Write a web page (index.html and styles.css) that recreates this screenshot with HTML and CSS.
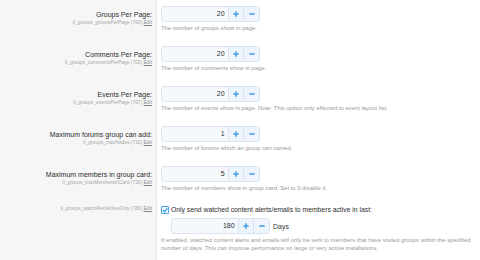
FILE: index.html
```html
<!DOCTYPE html>
<html>
<head>
<meta charset="utf-8">
<link rel="stylesheet" href="styles.css">
</head>
<body>
<div class="options">
  <div class="row">
    <div class="label">
      <div class="title">Groups Per Page:</div>
      <div class="hint">tl_groups_groupsPerPage (700) <span class="edit">Edit</span></div>
    </div>
    <div class="value">
      <div class="spin">
        <span class="field">20</span>
        <span class="btn"><svg viewBox="0 0 6 6" width="6" height="6"><path d="M3 0.3V5.7M0.3 3H5.7"/></svg></span>
        <span class="btn"><svg viewBox="0 0 6 6" width="6" height="6"><path d="M0.3 3H5.7"/></svg></span>
      </div>
      <div class="desc">The number of groups show in page.</div>
    </div>
  </div>
  <div class="row">
    <div class="label">
      <div class="title">Comments Per Page:</div>
      <div class="hint">tl_groups_commentsPerPage (705) <span class="edit">Edit</span></div>
    </div>
    <div class="value">
      <div class="spin">
        <span class="field">20</span>
        <span class="btn"><svg viewBox="0 0 6 6" width="6" height="6"><path d="M3 0.3V5.7M0.3 3H5.7"/></svg></span>
        <span class="btn"><svg viewBox="0 0 6 6" width="6" height="6"><path d="M0.3 3H5.7"/></svg></span>
      </div>
      <div class="desc">The number of comments show in page.</div>
    </div>
  </div>
  <div class="row">
    <div class="label">
      <div class="title">Events Per Page:</div>
      <div class="hint">tl_groups_eventsPerPage (707) <span class="edit">Edit</span></div>
    </div>
    <div class="value">
      <div class="spin">
        <span class="field">20</span>
        <span class="btn"><svg viewBox="0 0 6 6" width="6" height="6"><path d="M3 0.3V5.7M0.3 3H5.7"/></svg></span>
        <span class="btn"><svg viewBox="0 0 6 6" width="6" height="6"><path d="M0.3 3H5.7"/></svg></span>
      </div>
      <div class="desc">The number of events show in page. Note: This option only effected to event layout list.</div>
    </div>
  </div>
  <div class="row">
    <div class="label">
      <div class="title">Maximum forums group can add:</div>
      <div class="hint">tl_groups_maxNodes (710) <span class="edit">Edit</span></div>
    </div>
    <div class="value">
      <div class="spin">
        <span class="field">1</span>
        <span class="btn"><svg viewBox="0 0 6 6" width="6" height="6"><path d="M3 0.3V5.7M0.3 3H5.7"/></svg></span>
        <span class="btn"><svg viewBox="0 0 6 6" width="6" height="6"><path d="M0.3 3H5.7"/></svg></span>
      </div>
      <div class="desc">The number of forums which an group can owned.</div>
    </div>
  </div>
  <div class="row">
    <div class="label">
      <div class="title">Maximum members in group card:</div>
      <div class="hint">tl_groups_maxMembersInCard (720) <span class="edit">Edit</span></div>
    </div>
    <div class="value">
      <div class="spin">
        <span class="field">5</span>
        <span class="btn"><svg viewBox="0 0 6 6" width="6" height="6"><path d="M3 0.3V5.7M0.3 3H5.7"/></svg></span>
        <span class="btn"><svg viewBox="0 0 6 6" width="6" height="6"><path d="M0.3 3H5.7"/></svg></span>
      </div>
      <div class="desc">The number of members show in group card. Set to 0 disable it.</div>
    </div>
  </div>
  <div class="row last">
    <div class="label label-check">
      <div class="hint">tl_groups_watchAlertActiveOnly (780) <span class="edit">Edit</span></div>
    </div>
    <div class="value value-check">
      <div class="check-line">
        <span class="checkbox"><svg viewBox="0 0 8 8" width="8" height="8"><path d="M1.8 4.1L3.4 5.7L6.4 2.3"/></svg></span>
        <span class="check-text">Only send watched content alerts/emails to members active in last:</span>
      </div>
      <div class="sub">
        <div class="spin">
          <span class="field">180</span>
          <span class="btn"><svg viewBox="0 0 6 6" width="6" height="6"><path d="M3 0.3V5.7M0.3 3H5.7"/></svg></span>
          <span class="btn"><svg viewBox="0 0 6 6" width="6" height="6"><path d="M0.3 3H5.7"/></svg></span>
        </div>
        <span class="unit">Days</span>
      </div>
      <div class="desc desc-long">If enabled, watched content alerts and emails will only be sent to members that have visited groups within the specified number of days. This can improve performance on large or very active installations.</div>
    </div>
  </div>
</div>
</body>
</html>
```

FILE: styles.css
```css
html, body {
  margin: 0;
  padding: 0;
  background: #ffffff;
}

body {
  font-family: "Liberation Sans", Arial, sans-serif;
  color: #333333;
}

.options {
  display: flex;
  flex-direction: column;
  min-height: 260px;
}

.row {
  display: flex;
}

.row.last {
  flex: 1;
}

.label {
  width: 157px;
  flex: none;
  box-sizing: border-box;
  background: #f6f6f6;
  border-right: 1px solid #e6e6e6;
  padding: 10px 4px 0 0;
  text-align: right;
}

.title {
  font-size: 7px;
  line-height: 10px;
  color: #2d2d2d;
}

.hint {
  font-size: 4.9px;
  line-height: 5px;
  color: #a8a8a8;
}

.edit {
  color: #888888;
  text-decoration: underline;
}

.value {
  flex: 1;
  padding: 6px 6px 8px 4px;
}

.spin {
  display: flex;
  width: 99px;
  height: 16px;
  box-sizing: border-box;
  border: 1px solid #d9e4ef;
  border-radius: 3px;
  background: #f5f9fd;
  overflow: hidden;
}

.field {
  width: 67px;
  box-sizing: border-box;
  padding-right: 3px;
  text-align: right;
  font-size: 7px;
  line-height: 14px;
  color: #2d2d2d;
}

.btn {
  width: 15px;
  border-left: 1px solid #d9e4ef;
  background: #edf4fb;
  display: flex;
  align-items: center;
  justify-content: center;
}

.btn svg path {
  stroke: #3f9fe6;
  stroke-width: 1.5;
  fill: none;
}

.desc {
  margin-top: 2px;
  font-size: 5.9px;
  line-height: 8px;
  color: #9a9a9a;
}

.label-check {
  padding-top: 5px;
}

.label-check .hint {
  line-height: 7px;
}

.value-check {
  padding-top: 5px;
}

.check-line {
  display: flex;
  align-items: center;
  height: 10px;
}

.checkbox {
  width: 8px;
  height: 8px;
  box-sizing: border-box;
  border: 1px solid #4aa3e6;
  border-radius: 1px;
  background: #f3f9fe;
  display: flex;
  margin-right: 2px;
}

.checkbox svg {
  margin: -1px;
}

.checkbox path {
  stroke: #3f9fe6;
  stroke-width: 1.3;
  fill: none;
}

.check-text {
  font-size: 6.8px;
  line-height: 10px;
  color: #2d2d2d;
}

.sub {
  display: flex;
  align-items: center;
  margin: 3px 0 0 10px;
}

.unit {
  margin-left: 3px;
  font-size: 7px;
  color: #333333;
}

.desc-long {
  line-height: 8.3px;
  padding-right: 2px;
}
```
